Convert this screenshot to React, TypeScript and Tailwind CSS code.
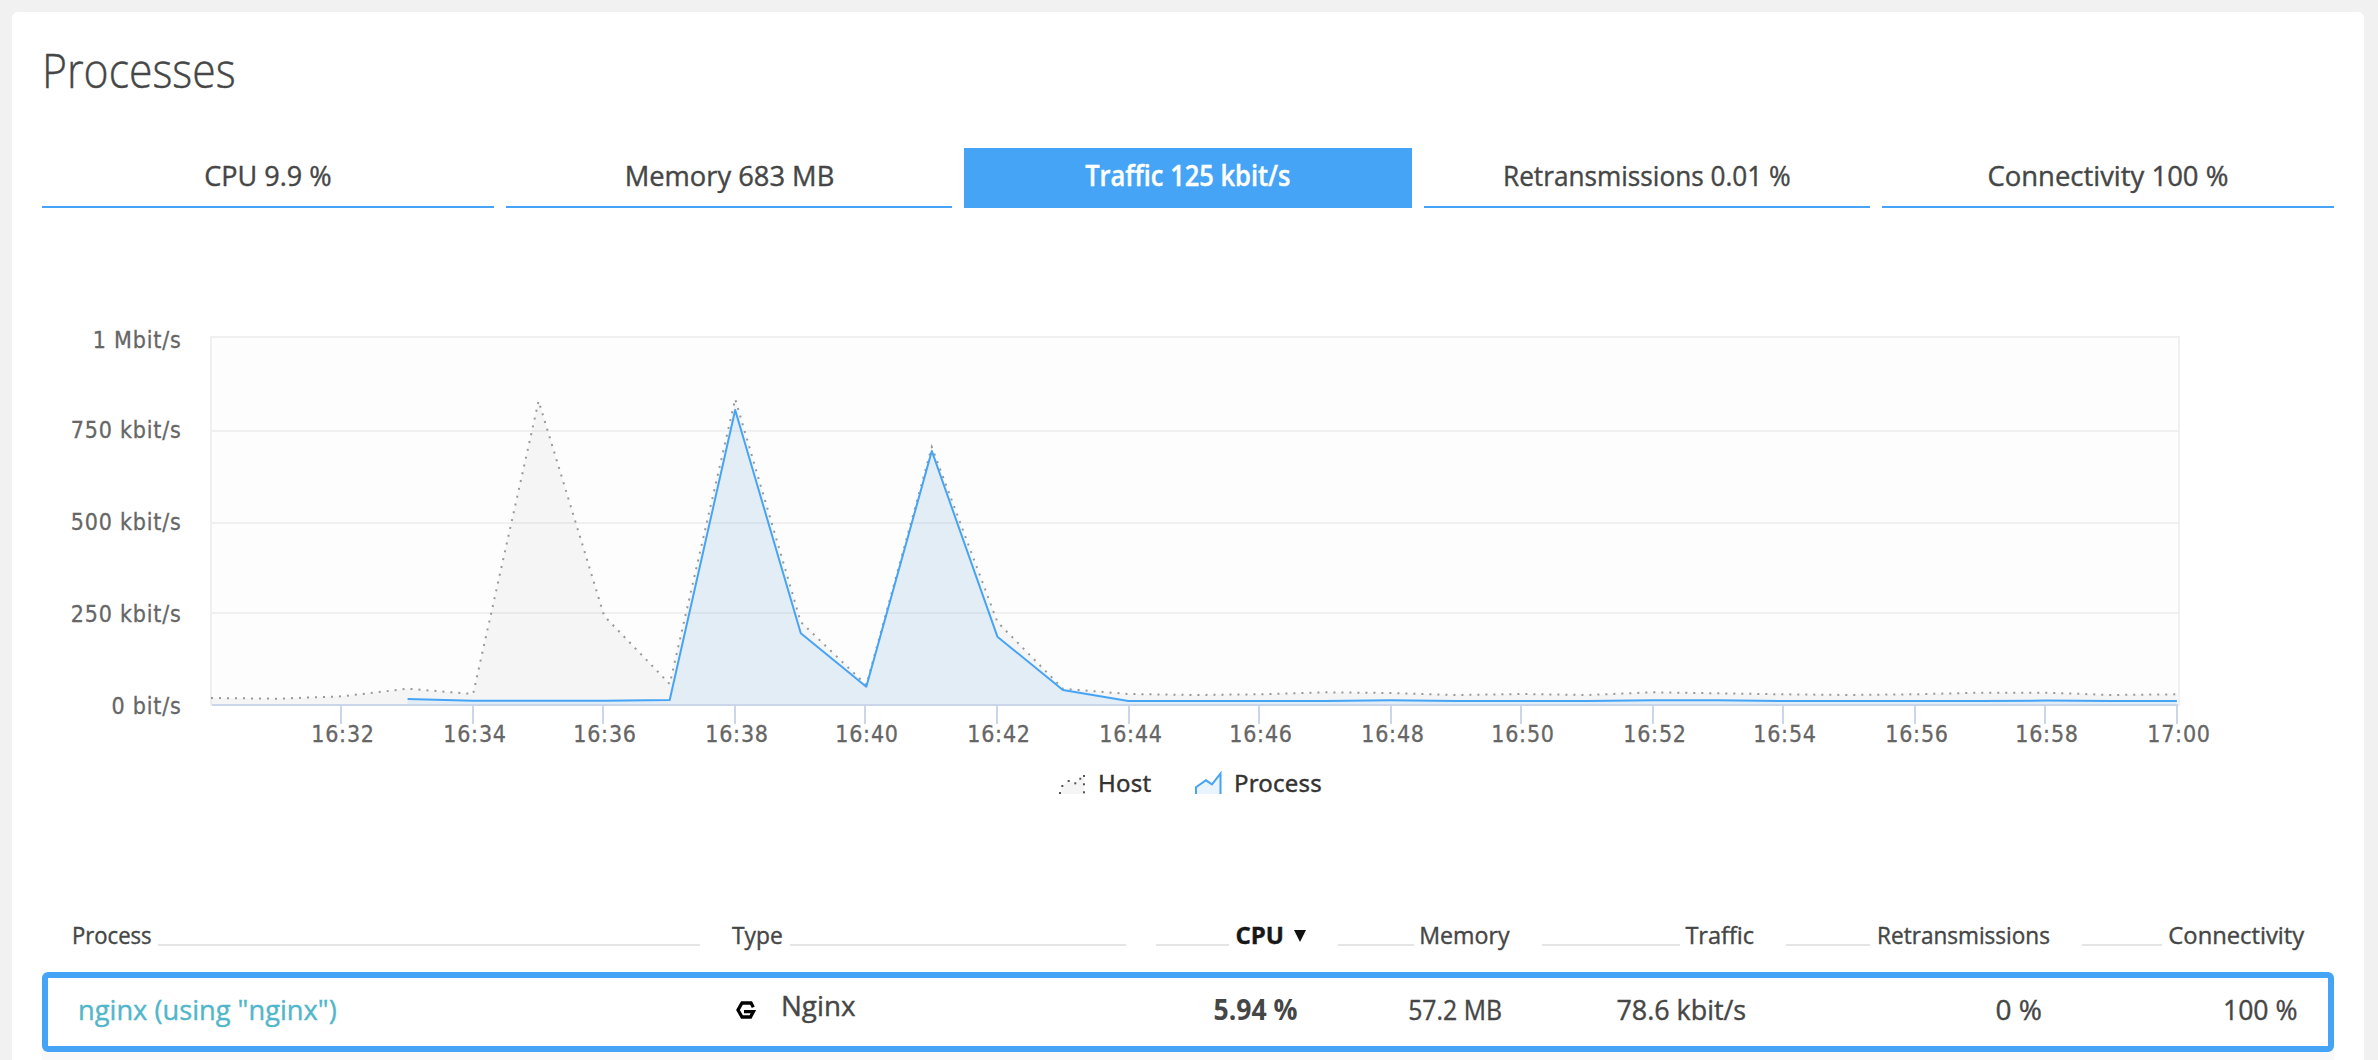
import React from "react";

const tabs = [
  { label: "CPU 9.9 %", width: "w-[452px]", text: "scale-x-[0.965]" },
  { label: "Memory 683 MB", width: "w-[446px]", text: "scale-x-[0.975]" },
  { label: "Traffic 125 kbit/s", width: "w-[448px]", text: "scale-x-[0.91]", active: true },
  { label: "Retransmissions 0.01 %", width: "w-[446px]", text: "scale-x-[0.935]" },
  { label: "Connectivity 100 %", width: "w-[452px]", text: "scale-x-[0.98]" },
];

const X0 = 211;
const STEP = 65.53;
const BASE = 704;

const host = [
  698, 698.7, 696.3, 688.7, 694, 401, 616, 684, 399, 622, 685, 447, 622, 688.7, 694, 695, 694.3,
  692.3, 693, 695, 694, 695, 692.3, 693.3, 694.3, 695, 694.3, 692.7, 692.7, 695, 694.3,
];
const proc = [
  699, 700.7, 700.7, 700.7, 700, 410, 633.3, 686.7, 451, 636.7, 690, 701, 701, 701, 701, 700.3, 701,
  701, 701, 700.3, 700.3, 701, 701, 701, 701, 700.6, 701, 701,
];
const toPoints = (ys: number[], offset: number) =>
  ys.map((y, i) => `${(X0 + (i + offset) * STEP).toFixed(1)},${y}`).join(" ");

const hostPts = toPoints(host, 0);
const procPts = toPoints(proc, 3);

const yLabels: [string, number][] = [
  ["1 Mbit/s", 348],
  ["750 kbit/s", 438],
  ["500 kbit/s", 530],
  ["250 kbit/s", 622],
  ["0 bit/s", 714],
];
const ticks: [string, number][] = [
  ["16:32", 341], ["16:34", 473], ["16:36", 603], ["16:38", 735], ["16:40", 865],
  ["16:42", 997], ["16:44", 1129], ["16:46", 1259], ["16:48", 1391], ["16:50", 1521],
  ["16:52", 1653], ["16:54", 1783], ["16:56", 1915], ["16:58", 2045], ["17:00", 2177],
];

function TrafficChart() {
  return (
    <svg className="mt-[112px] block h-[440px] w-[2292px]" viewBox="42 320 2292 440">
      <g shapeRendering="crispEdges">
        <rect x="211" y="337" width="1967" height="368" fill="#fdfdfd" />
        {[336, 430, 522, 612].map((y) => (
          <rect key={y} x="211" y={y} width="1967" height="2" fill="#f0f0f0" />
        ))}
        <rect x="210" y="336" width="2" height="370" fill="#f0f0f0" />
        <rect x="2178" y="336" width="2" height="370" fill="#f0f0f0" />
      </g>
      <polygon points={`211,${BASE} ${hostPts} 2177,${BASE}`} fill="#999999" fillOpacity="0.08" />
      <polyline points={hostPts} fill="none" stroke="#999999" strokeWidth="2" strokeDasharray="2 6" />
      <polygon points={`407.6,${BASE} ${procPts} 2177,${BASE}`} fill="#42a5f5" fillOpacity="0.1" />
      <polyline points={procPts} fill="none" stroke="#45a4f5" strokeWidth="2" strokeLinejoin="round" />
      <g shapeRendering="crispEdges" fill="#ccd6eb">
        <rect x="212" y="704" width="1966" height="2" />
        {ticks.map(([t, x]) => (
          <rect key={t} x={x - 1} y="706" width="2" height="18" />
        ))}
      </g>
      <g
        className="fill-[#666666] font-['DejaVu_Sans_Condensed','DejaVu_Sans',sans-serif] text-[23px] tracking-[0.8px] [font-stretch:75%]"
        stroke="#666666"
        strokeWidth="0.3"
      >
        {yLabels.map(([t, y]) => (
          <text key={t} x="181.5" y={y} textAnchor="end">{t}</text>
        ))}
        {ticks.map(([t, x]) => (
          <text key={t} x={x + 2} y="742" textAnchor="middle">{t}</text>
        ))}
      </g>
    </svg>
  );
}

function Legend() {
  return (
    <div className="mt-[7px] flex h-8 items-center pl-[1017px] font-['Noto_Sans',sans-serif] text-2xl leading-8 font-normal text-[#333333]">
      <svg className="h-[24px] w-[27px]" viewBox="1059 771 27 24">
        <polygon points="1060,794 1062,786 1069,781 1075,783 1080,779 1084,776 1084,794" fill="#f5f5f5" />
        <g fill="#555555">
          <rect x="1059" y="792" width="2" height="2" />
          <rect x="1061.3" y="785" width="2" height="2" />
          <rect x="1067.7" y="780" width="2" height="2" />
          <rect x="1074.3" y="782.3" width="2" height="2" />
          <rect x="1079.3" y="777.7" width="2" height="2" />
          <rect x="1083" y="775" width="2" height="2" />
          <rect x="1083" y="783.3" width="2" height="2" />
          <rect x="1083" y="791.3" width="2" height="2" />
        </g>
      </svg>
      <span className="ml-3 w-[97px] tracking-[0.2px]">Host</span>
      <svg className="h-[24px] w-[27px]" viewBox="1195 771 27 24">
        <path d="M1196 794V787.3L1206 780.3L1212 784.3L1220.5 773.5V794Z" fill="#e9f4fe" />
        <path d="M1196 794V787.3L1206 780.3L1212 784.3L1220.5 773.5V794" fill="none" stroke="#45a4f5" strokeWidth="2" />
      </svg>
      <span className="ml-3 tracking-[0.2px]">Process</span>
    </div>
  );
}

const cols = "grid grid-cols-[660px_424px_182px_204px_244px_296px_222px]";

function Rule() {
  return <span className="mt-[25px] h-0.5 flex-1 bg-[#e5e5e5]" />;
}

function RightHead({ label, pad, box, text }: { label: string; pad: string; box: string; text: string }) {
  return (
    <div className={`flex ${pad}`}>
      <Rule />
      <span className={`flex justify-end ${box}`}>
        <span className={`origin-right ${text}`}>{label}</span>
      </span>
    </div>
  );
}

function NginxIcon() {
  return (
    <svg className="mt-[23px] h-[18px] w-5" viewBox="0 0 20 18">
      <path d="M17.3 6.2L15 2H6L2 9L6 16H14.5L17.4 10.6H8" fill="none" stroke="#000" strokeWidth="3.3" />
    </svg>
  );
}

export default function App() {
  return (
    <div className="h-[1060px] overflow-hidden bg-[#f1f1f1] pl-3 pr-3.5 pt-3 font-['Open_Sans',sans-serif] text-[#454646] [-webkit-text-stroke:0.4px]">
      <main className="h-[1060px] rounded-t-md bg-white px-[30px] pt-[28px]">
        <h1 className="text-[48px] leading-[60px] font-light">
          <span className="inline-block origin-left scale-x-[0.89]">Processes</span>
        </h1>
        <nav className="mt-[48px] flex gap-3 text-[28px] leading-[54px]">
          {tabs.map((t) => (
            <div
              key={t.label}
              className={`${t.width} h-[60px] border-b-2 border-[#45a4f5] text-center ${t.active ? "bg-[#45a4f5] font-semibold text-white" : ""}`}
            >
              <span className={`inline-block ${t.text}`}>{t.label}</span>
            </div>
          ))}
        </nav>
        <TrafficChart />
        <Legend />
        <section className="mt-[120px]">
          <div className={`${cols} h-8 pl-[30px] text-2xl leading-8`}>
            <div className="flex pr-8">
              <span className="flex w-[86px]"><span className="origin-left scale-x-[0.92]">Process</span></span>
              <Rule />
            </div>
            <div className="flex pr-[30px]">
              <span className="flex w-[58px]"><span className="origin-left scale-x-[0.95]">Type</span></span>
              <Rule />
            </div>
            <div className="flex pr-8 font-bold text-[#171717]">
              <Rule />
              <span className="ml-1.5">CPU</span>
              <svg className="mt-[11px] ml-[10px] h-3 w-3" viewBox="0 0 12 12">
                <path d="M0 0H12L6 12Z" fill="#111" />
              </svg>
            </div>
            <RightHead label="Memory" pad="pr-8" box="w-[96px]" text="scale-x-[0.965]" />
            <RightHead label="Traffic" pad="pr-8" box="w-[74px]" text="scale-x-[0.98]" />
            <RightHead label="Retransmissions" pad="pr-8" box="w-[180px]" text="scale-x-[0.94]" />
            <RightHead label="Connectivity" pad="" box="w-[142px]" text="scale-x-[0.99]" />
          </div>
          <div className={`${cols} mt-[21px] h-20 rounded-md border-6 border-[#45a4f5] pl-6 text-[28px] leading-[62px]`}>
            <div className="pl-1.5 text-[#52b6ca]">
              <span className="inline-block origin-left scale-x-[0.973]">nginx (using "nginx")</span>
            </div>
            <div className="flex pl-1">
              <NginxIcon />
              <span className="ml-[25px] origin-left scale-x-[0.99] leading-[54px]">Nginx</span>
            </div>
            <div className="pr-[40px] text-right font-bold [-webkit-text-stroke:0px]">
              <span className="inline-block origin-right scale-x-[0.95]">5.94 %</span>
            </div>
            <div className="pr-[40px] text-right">
              <span className="inline-block origin-right scale-x-[0.885]">57.2 MB</span>
            </div>
            <div className="pr-[40px] text-right">
              <span className="inline-block origin-right scale-x-[0.96]">78.6 kbit/s</span>
            </div>
            <div className="pr-[40px] text-right">
              <span className="inline-block origin-right">0 %</span>
            </div>
            <div className="pr-[7px] text-right">
              <span className="inline-block origin-right scale-x-[0.95]">100 %</span>
            </div>
          </div>
          <div className="h-8 bg-[#f9f9f9]" />
        </section>
      </main>
    </div>
  );
}
